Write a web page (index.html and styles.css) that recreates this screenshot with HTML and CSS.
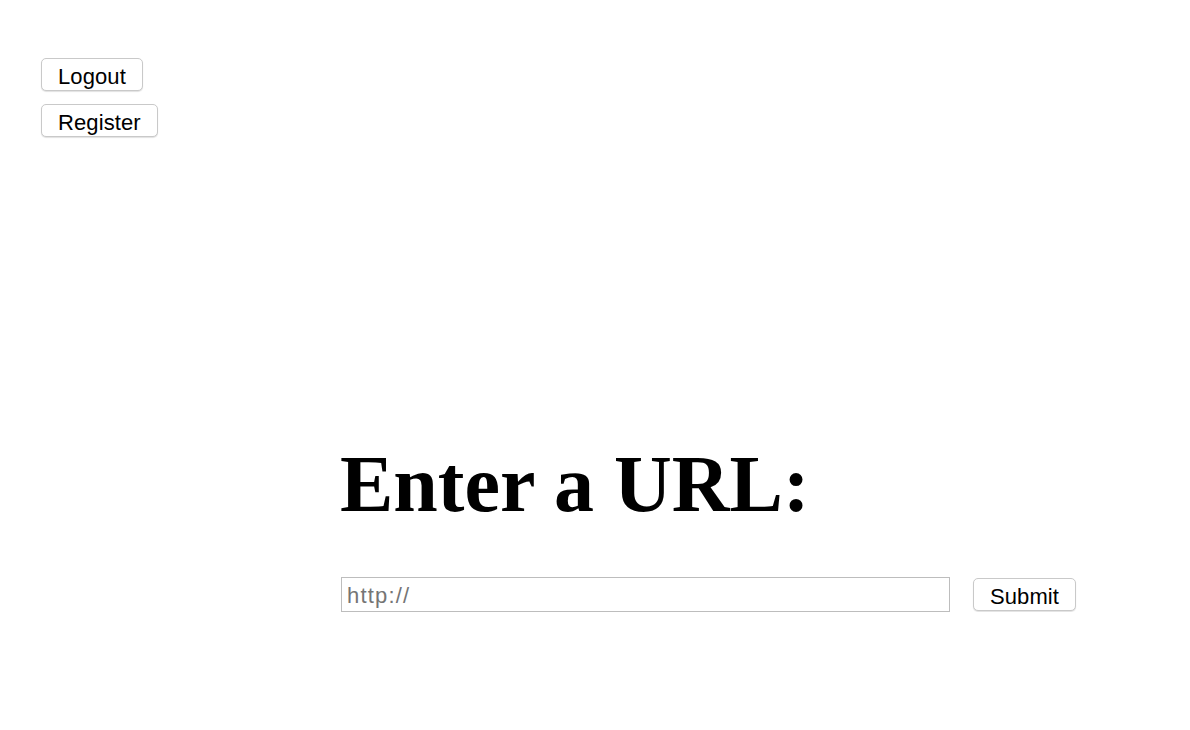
FILE: index.html
```html
<!DOCTYPE html>
<html>
<head>
<meta charset="utf-8">
<link rel="stylesheet" href="styles.css">
</head>
<body>
<div class="auth">
  <button class="btn">Logout</button>
  <button class="btn">Register</button>
</div>
<main class="main">
  <h1 class="title">Enter a URL:</h1>
  <form class="url-form">
    <input class="url-input" type="text" placeholder="http://">
    <button class="btn" type="button">Submit</button>
  </form>
</main>
</body>
</html>
```

FILE: styles.css
```css
html, body {
  margin: 0;
  padding: 0;
  background: #ffffff;
}
body {
  font-family: "Liberation Sans", Arial, sans-serif;
}
.auth {
  display: flex;
  flex-direction: column;
  align-items: flex-start;
  gap: 13px;
  padding: 58px 0 0 41px;
}
.btn {
  font-family: "Liberation Sans", Arial, sans-serif;
  font-size: 22px;
  letter-spacing: 0.1px;
  line-height: 25px;
  height: 33px;
  padding: 5px 16px 1px 16px;
  background: #ffffff;
  color: #000;
  border: 1px solid #c9c9c9;
  border-radius: 5px;
  box-shadow: 0 1px 1px rgba(0,0,0,0.12);
  box-sizing: border-box;
  cursor: pointer;
}
.main {
  margin-top: 307px;
  padding-left: 340px;
}
.title {
  margin: 0;
  font-family: "Liberation Serif", "Times New Roman", serif;
  font-weight: bold;
  font-size: 80px;
  line-height: 80px;
  color: #000;
}
.url-form {
  display: flex;
  align-items: center;
  gap: 23px;
  margin-top: 53px;
  padding-left: 1px;
}
.url-input {
  width: 609px;
  height: 35px;
  box-sizing: border-box;
  border: 1px solid #bdbdbd;
  padding: 3px 5px 0;
  font-family: "Liberation Sans", Arial, sans-serif;
  font-size: 22px;
  letter-spacing: 1.2px;
  color: #000;
  outline: none;
  margin: 0;
}
.url-input::placeholder {
  color: #757575;
}
```
